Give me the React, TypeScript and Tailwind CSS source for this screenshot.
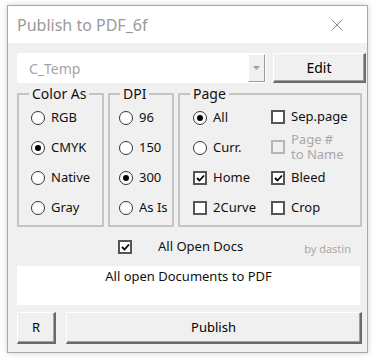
import React from 'react';

const font = { fontFamily: '"Noto Sans", "Open Sans", sans-serif' };

function Radio({ checked }: { checked?: boolean }) {
  return (
    <span className="flex h-[14px] w-[14px] shrink-0 items-center justify-center rounded-full border border-[#333] bg-white">
      {checked && <span className="h-[6px] w-[6px] rounded-full bg-black" />}
    </span>
  );
}

function Check({ checked, disabled }: { checked?: boolean; disabled?: boolean }) {
  return (
    <span
      className={`flex h-[14px] w-[14px] shrink-0 items-center justify-center border-2 ${
        disabled ? 'border-[#b5b5b5] bg-[#f0f0f0]' : 'border-[#555] bg-white'
      }`}
    >
      {checked && (
        <svg width="9" height="8" viewBox="0 0 9 8">
          <path d="M1 4 L3.5 6.5 L8 1.5" fill="none" stroke="#000" strokeWidth="1.8" />
        </svg>
      )}
    </span>
  );
}

function RadioRow({ label, checked }: { label: string; checked?: boolean }) {
  return (
    <div className="flex h-[30px] items-center gap-[6px]">
      <Radio checked={checked} />
      <span>{label}</span>
    </div>
  );
}

function CheckRow({ label, checked }: { label: string; checked?: boolean }) {
  return (
    <div className="flex h-[30px] items-center gap-[6px]">
      <Check checked={checked} />
      <span>{label}</span>
    </div>
  );
}

function Group({ title, className, inner, children }: { title: string; className: string; inner: string; children: React.ReactNode }) {
  return (
    <fieldset className={`border-2 border-[#c4c4c4] ${className}`}>
      <legend className="ml-[10px] px-[3px] text-[14px] leading-[16px]">{title}</legend>
      <div className={inner}>{children}</div>
    </fieldset>
  );
}

function Button({ children, className }: { children: React.ReactNode; className: string }) {
  return (
    <button className={`flex items-center justify-center border-t border-l border-t-white border-l-white border-r-2 border-b-2 border-r-[#6b6b6b] border-b-[#6b6b6b] bg-[#f0f0f0] text-[13px] text-black shadow-[inset_-1px_-1px_0_#a0a0a0] ${className}`}>
      {children}
    </button>
  );
}

export default function App() {
  return (
    <div className="h-[358px] w-[375px] bg-white pt-[5px] pl-[7px]" style={font}>
      <div className="flex h-[348px] w-[361px] flex-col border border-[#a8a8a8] bg-[#f0f0f0] shadow-[0_0_6px_rgba(0,0,0,0.18)]">
        {/* Title bar */}
        <div className="flex h-[37px] shrink-0 items-center justify-between bg-white pl-[9px] pr-[24px] text-[16px] text-[#9a9a9a]">
          <span>Publish to PDF_6f</span>
          <svg width="12" height="12" viewBox="0 0 12 12">
            <path d="M0.5 0.5 L11.5 11.5 M11.5 0.5 L0.5 11.5" stroke="#8a8a8a" strokeWidth="1" />
          </svg>
        </div>

        <div className="flex flex-col pl-[9px] pt-[10px] text-[13px] text-[#111]">
          {/* Preset row */}
          <div className="flex h-[30px] gap-[7px]">
            <div className="flex w-[249px] bg-white">
              <div className="flex flex-1 items-center pl-[12px] text-[14px] text-[#a4a4a4]">C_Temp</div>
              <div className="my-[1px] mr-[1px] flex w-[17px] items-center justify-center border border-t-white border-l-white border-r-[#9a9a9a] border-b-[#9a9a9a] bg-[#f0f0f0]">
                <svg width="7" height="4" viewBox="0 0 7 4">
                  <path d="M0 0 H7 L3.5 4 Z" fill="#a0a0a0" />
                </svg>
              </div>
            </div>
            <Button className="w-[93px] text-[14px]">Edit</Button>
          </div>

          {/* Groups */}
          <div className="mt-[3px] flex gap-[4px]">
            <Group title="Color As" className="h-[141px] w-[87px]" inner="pl-[12px] pt-[1px]">
              <RadioRow label="RGB" />
              <RadioRow label="CMYK" checked />
              <RadioRow label="Native" />
              <RadioRow label="Gray" />
            </Group>
            <Group title="DPI" className="h-[141px] w-[66px]" inner="pl-[9px] pt-[1px]">
              <RadioRow label="96" />
              <RadioRow label="150" />
              <RadioRow label="300" checked />
              <RadioRow label="As Is" />
            </Group>
            <Group title="Page" className="h-[141px] w-[184px]" inner="flex pl-[13px] pt-[1px]">
              <div className="w-[78px]">
                <RadioRow label="All" checked />
                <RadioRow label="Curr." />
                <CheckRow label="Home" checked />
                <CheckRow label="2Curve" />
              </div>
              <div>
                <div className="flex h-[27px] items-center gap-[6px]">
                  <Check />
                  <span>Sep.page</span>
                </div>
                <div className="flex h-[33px] items-center gap-[6px]">
                  <Check disabled />
                  <span className="leading-[15px] text-[#a8a8a8]">
                    Page #
                    <br />
                    to Name
                  </span>
                </div>
                <CheckRow label="Bleed" checked />
                <CheckRow label="Crop" />
              </div>
            </Group>
          </div>

          {/* All open docs */}
          <div className="mt-[8px] flex h-[24px] items-center">
            <div className="ml-[101px]">
              <Check checked />
            </div>
            <span className="ml-[26px]">All Open Docs</span>
            <span className="ml-[61px] mt-[4px] text-[11px] text-[#a8a8a8]">by dastin</span>
          </div>

          {/* Info box */}
          <div className="mt-[7px] h-[39px] w-[343px] bg-white pt-[1px] text-center">All open Documents to PDF</div>

          {/* Bottom buttons */}
          <div className="mt-[7px] flex h-[32px] gap-[10px]">
            <Button className="w-[39px]">R</Button>
            <Button className="w-[296px]">Publish</Button>
          </div>
        </div>
      </div>
    </div>
  );
}
